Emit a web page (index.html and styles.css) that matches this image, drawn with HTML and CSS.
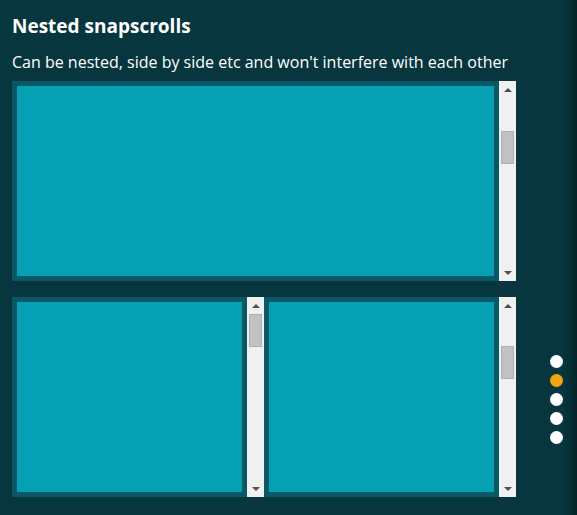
FILE: index.html
```html
<!DOCTYPE html>
<html lang="en">
<head>
    <meta charset="UTF-8">
    <meta name="viewport" content="width=device-width, initial-scale=1.0">
    <title>Nested snapscrolls</title>
    <link rel="stylesheet" href="styles.css">
</head>
<body>
    <section class="demo">
        <h2 class="demo-title">Nested snapscrolls</h2>
        <p class="demo-lead">Can be nested, side by side etc and won't interfere with each other</p>

        <div class="snap-box">
            <div class="snap-view"><div class="panel"></div></div>
            <div class="scrollbar">
                <span class="sb-btn up"></span>
                <div class="sb-track"><div class="sb-thumb" style="margin-top: 33px"></div></div>
                <span class="sb-btn down"></span>
            </div>
        </div>

        <div class="snap-row">
            <div class="snap-box">
                <div class="snap-view"><div class="panel"></div></div>
                <div class="scrollbar">
                    <span class="sb-btn up"></span>
                    <div class="sb-track"><div class="sb-thumb" style="margin-top: 0px"></div></div>
                    <span class="sb-btn down"></span>
                </div>
            </div>
            <div class="snap-box">
                <div class="snap-view"><div class="panel"></div></div>
                <div class="scrollbar">
                    <span class="sb-btn up"></span>
                    <div class="sb-track"><div class="sb-thumb" style="margin-top: 32px"></div></div>
                    <span class="sb-btn down"></span>
                </div>
            </div>
        </div>
    </section>

    <nav class="page-dots">
        <span class="dot"></span>
        <span class="dot active"></span>
        <span class="dot"></span>
        <span class="dot"></span>
        <span class="dot"></span>
    </nav>
</body>
</html>
```

FILE: styles.css
```css
html, body { margin: 0; height: 100%; }
body { background: #07363f; color: #fff; font-family: "Open Sans", "Noto Sans", sans-serif; overflow: hidden; }
body::after { content: ""; position: fixed; top: 0; right: 0; bottom: 0; width: 14px; background: linear-gradient(to right, rgba(0,0,0,0), rgba(0,0,0,0.35)); }

.demo { width: 504px; padding: 13px 0 0 12px; }
.demo-title { margin: 0; font-size: 19px; font-weight: 700; line-height: 26px; }
.demo-lead { margin: 12px 0 0; font-size: 16px; line-height: 22px; }

.snap-box { display: flex; height: 200px; margin-top: 8px; }
.snap-view { flex: 1; padding: 5px; background: #0a5866; }
.panel { height: 100%; background: #06a0b4; }

.snap-row { display: flex; margin-top: 16px; }
.snap-row .snap-box { flex: 1; margin-top: 0; }

.scrollbar { width: 17px; display: flex; flex-direction: column; background: #f0f0f0; }
.sb-btn { height: 17px; display: flex; align-items: center; justify-content: center; }
.sb-btn::before { content: ""; border-left: 4px solid transparent; border-right: 4px solid transparent; }
.sb-btn.up::before { border-bottom: 4px solid #505050; }
.sb-btn.down::before { border-top: 4px solid #505050; }
.sb-track { flex: 1; padding: 0 2px; }
.sb-thumb { height: 33px; background: #c1c1c1; box-shadow: inset 0 0 0 1px #b0b0b0; }

.page-dots { position: fixed; right: 14px; top: 355px; display: flex; flex-direction: column; gap: 6px; }
.dot { width: 13px; height: 13px; border-radius: 50%; background: #fff; }
.dot.active { background: #f2a60d; }
```
